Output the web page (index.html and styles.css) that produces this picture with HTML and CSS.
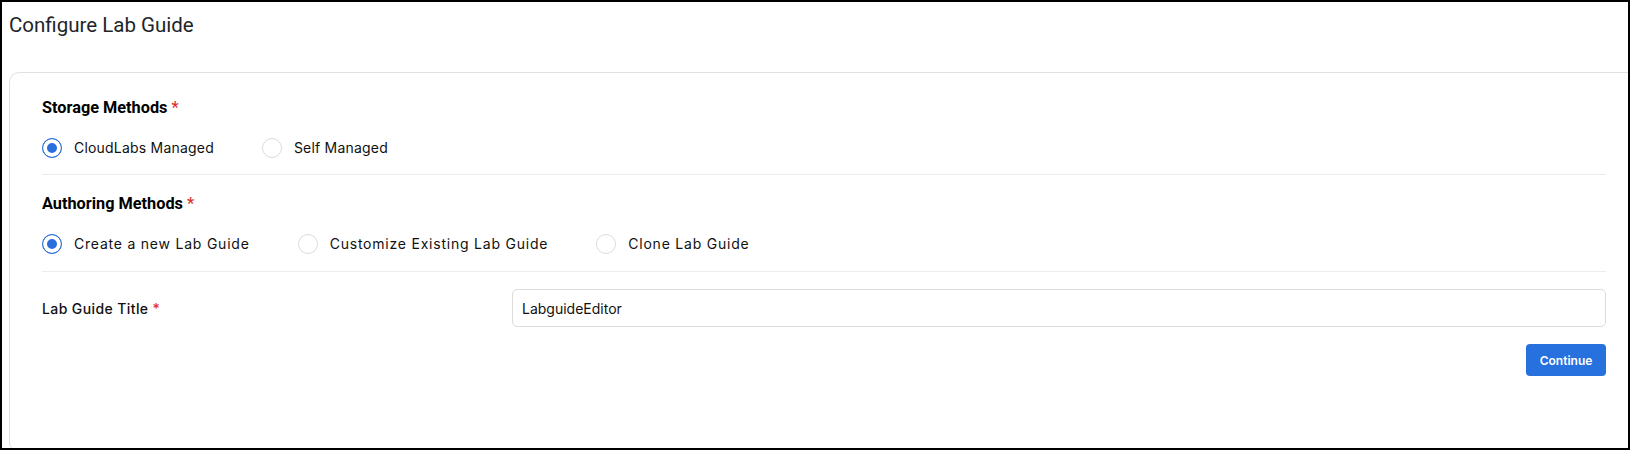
FILE: index.html
```html
<!DOCTYPE html>
<html lang="en">
<head>
<meta charset="utf-8">
<title>Configure Lab Guide</title>
<link rel="stylesheet" href="styles.css">
</head>
<body>
<div class="frame">
  <h1 class="page-title">Configure Lab Guide</h1>
  <div class="card">
    <section class="group">
      <h2 class="group-title">Storage Methods <span class="req">*</span></h2>
      <div class="options options-storage">
        <label class="option"><span class="radio checked"></span><span class="option-text">CloudLabs Managed</span></label>
        <label class="option"><span class="radio"></span><span class="option-text">Self Managed</span></label>
      </div>
    </section>
    <section class="group group-last">
      <h2 class="group-title">Authoring Methods <span class="req">*</span></h2>
      <div class="options options-authoring">
        <label class="option"><span class="radio checked"></span><span class="option-text">Create a new Lab Guide</span></label>
        <label class="option"><span class="radio"></span><span class="option-text">Customize Existing Lab Guide</span></label>
        <label class="option"><span class="radio"></span><span class="option-text">Clone Lab Guide</span></label>
      </div>
    </section>
    <div class="form-row">
      <label class="field-label" for="title">Lab Guide Title <span class="req">*</span></label>
      <input class="field-input" id="title" type="text" value="LabguideEditor">
    </div>
    <div class="actions">
      <button class="btn-primary" type="button">Continue</button>
    </div>
  </div>
</div>
</body>
</html>
```

FILE: styles.css
```css
* { box-sizing: border-box; }

html, body {
  margin: 0;
  padding: 0;
  background: #fff;
}

.frame {
  width: 1630px;
  height: 450px;
  border: 2px solid #000;
  overflow: hidden;
  padding: 11px 0 0 7px;
  font-family: Inter, "Noto Sans", sans-serif;
  color: #212529;
}

.page-title {
  margin: 0;
  font-family: Roboto, "Liberation Sans", sans-serif;
  font-weight: 400;
  font-size: 20.5px;
  line-height: 24px;
  color: #212529;
}

.card {
  margin-top: 35px;
  margin-right: -11px;
  height: 380px;
  border: 1px solid #dee2e6;
  border-radius: 10px;
  padding: 6px 32px 0 32px;
  background: #fff;
}

.group {
  padding: 19px 0 16px;
  border-bottom: 1px solid #ececec;
}

.group-last {
  padding-bottom: 17px;
}

.group-title {
  margin: 0 0 21px;
  font-family: Roboto, "Liberation Sans", sans-serif;
  font-size: 16.3px;
  line-height: 19px;
  font-weight: 700;
  color: #000;
}

.req {
  color: #e03131;
  font-weight: 500;
}

.options {
  display: flex;
  align-items: center;
  gap: 48px;
}

.option {
  display: flex;
  align-items: center;
  gap: 12px;
  font-size: 14px;
  line-height: 20px;
  color: #111;
}

.options-storage .option-text {
  letter-spacing: 0.2px;
}

.options-authoring .option-text {
  letter-spacing: 0.78px;
}

.radio {
  width: 20px;
  height: 20px;
  border-radius: 50%;
  border: 1px solid #dcdcdc;
  background: #fff;
  flex: none;
}

.radio.checked {
  border-color: #2a6fdb;
  background: #2a6fdb;
  box-shadow: inset 0 0 0 4px #fff;
}

.form-row {
  display: grid;
  grid-template-columns: 470px 1fr;
  align-items: center;
  margin-top: 17px;
}

.field-label {
  font-size: 14px;
  font-weight: 500;
  letter-spacing: 0.4px;
  color: #111;
}

.field-input {
  height: 38px;
  width: 100%;
  border: 1px solid #dcdcdc;
  border-radius: 5px;
  padding: 0 9px;
  font-family: Inter, "Noto Sans", sans-serif;
  font-size: 14px;
  color: #111;
  background: #fff;
  outline: none;
}

.actions {
  display: flex;
  justify-content: flex-end;
  margin-top: 17px;
}

.btn-primary {
  width: 80px;
  height: 32px;
  border: none;
  border-radius: 4px;
  background: #2671de;
  color: #fff;
  font-family: Inter, "Noto Sans", sans-serif;
  font-size: 12px;
  font-weight: 600;
  padding: 0;
}
```
